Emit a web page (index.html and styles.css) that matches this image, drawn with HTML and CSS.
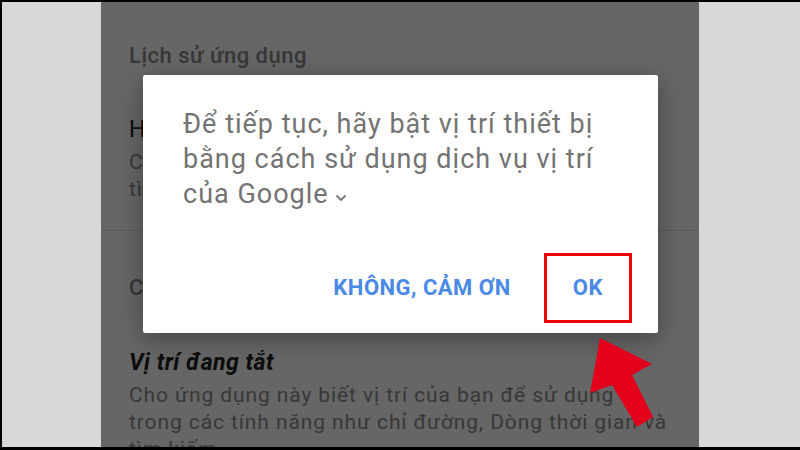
FILE: index.html
```html
<!DOCTYPE html>
<html>
<head>
<meta charset="utf-8" />
<title>Vị trí</title>
<link rel="stylesheet" href="styles.css">
</head>
<body>
<div class="frame">
  <div class="side"></div>
  <div class="phone">
    <div class="screen">
      <div class="sec_title">Lịch sử ứng dụng</div>
      <div class="item_title">Hoạt động trên web</div>
      <div class="item_text">Cho phép lưu hoạt động của bạn<br />tìm kiếm trên Google</div>
      <div class="divider"></div>
      <div class="sec_title">Chế độ</div>
      <div class="item_title off">Vị trí đang tắt</div>
      <div class="item_text">Cho ứng dụng này biết vị trí của bạn để sử dụng<br />trong các tính năng như chỉ đường, Dòng thời gian và<br />tìm kiếm</div>
    </div>
    <div class="scrim"></div>
    <div class="dialog">
      <div class="dialog_text">Để tiếp tục, hãy bật vị trí thiết bị<br />bằng cách sử dụng dịch vụ vị trí<br />của Google<svg class="chevron" width="12" height="8" viewBox="0 0 12 8"><path d="M1.5 1.5 L6 6 L10.5 1.5" fill="none" stroke="#737373" stroke-width="1.8" /></svg></div>
      <div class="dialog_buttons">
        <span class="btn">KHÔNG, CẢM ƠN</span>
        <span class="ok_mark"><span class="btn">OK</span></span>
      </div>
    </div>
  </div>
  <div class="side right"></div>
  <svg class="arrow" width="75" height="100" viewBox="0 0 75 100">
    <polygon points="15,3 67,29 47,40 68,82 52,92 27,50 5,58" fill="#e3001b" />
  </svg>
</div>
</body>
</html>
```

FILE: styles.css
```css
body {
  margin: 0;
  font-family: Roboto, "Noto Sans", sans-serif; }
.frame {
  position: relative;
  display: flex;
  width: 800px;
  height: 450px;
  box-sizing: border-box;
  border-top: 2px solid #000;
  border-left: 2px solid #000;
  border-bottom: 3px solid #000;
  background-color: #d8d8d8; }
.side { width: 99px; }
.side.right { flex: 1; }
.phone {
  position: relative;
  width: 598px;
  overflow: hidden;
  background-color: #fff; }
.screen { padding: 40px 28px 0; }
.sec_title {
  font-size: 22px;
  line-height: 28px;
  letter-spacing: 0.5px;
  font-weight: 500;
  color: #8a8a8a; }
.item_title {
  margin-top: 46px;
  font-size: 23px;
  line-height: 28px;
  color: #222; }
.item_title.off {
  margin-top: 47px;
  letter-spacing: 0.5px;
  font-weight: bold;
  font-style: italic; }
.item_text {
  margin-top: 5px;
  font-size: 21px;
  line-height: 27px;
  letter-spacing: 0.9px;
  color: #8c8c8c; }
.divider {
  margin: 27px -28px 43px;
  height: 1px;
  background-color: #e2e2e2; }
.scrim {
  position: absolute;
  top: 0; left: 0; right: 0; bottom: 0;
  background-color: rgba(0, 0, 0, 0.6); }
.dialog {
  position: absolute;
  left: 42px;
  top: 73px;
  width: 515px;
  height: 258px;
  box-sizing: border-box;
  padding: 32px 26px 10px 40px;
  display: flex;
  flex-direction: column;
  background-color: #fff;
  border-radius: 2px;
  box-shadow: 0 6px 24px rgba(0, 0, 0, 0.35); }
.dialog_text {
  font-size: 27px;
  line-height: 35px;
  letter-spacing: 1px;
  color: #737373; }
.chevron {
  margin-left: 6px;
  vertical-align: 1px; }
.dialog_buttons {
  margin-top: auto;
  display: flex;
  justify-content: flex-end;
  align-items: center;
  gap: 33px; }
.btn {
  font-size: 22px;
  line-height: 24px;
  letter-spacing: 0.5px;
  font-weight: bold;
  color: #4a89e6; }
.ok_mark {
  padding: 20px 26px;
  border: 3px solid #f20000; }
.arrow {
  position: absolute;
  left: 583px;
  top: 333px; }
```
